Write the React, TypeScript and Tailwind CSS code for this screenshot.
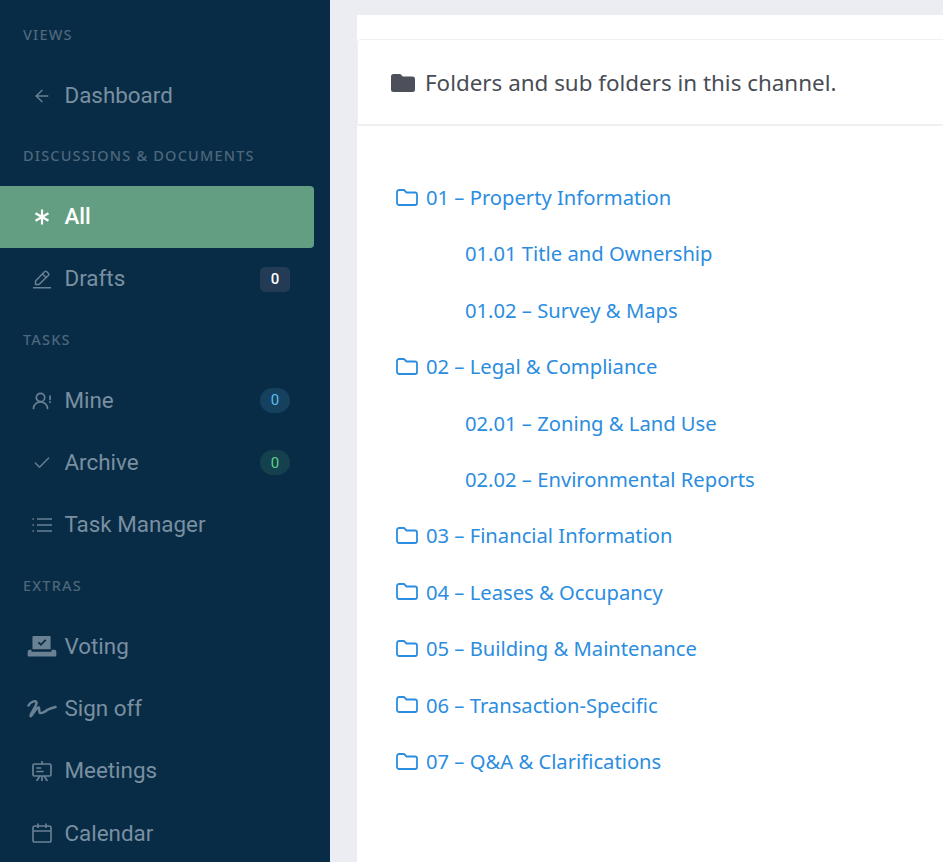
import { ArrowLeft, Check } from 'lucide-react'
import type { ReactNode } from 'react'

function AsteriskIcon() {
  return (
    <svg viewBox="0 0 16 16" className="w-[16px] h-[16px]" fill="none" stroke="currentColor" strokeWidth="2.2" strokeLinecap="butt">
      <path d="M8 .5v15M1.500 4.250l13 7.500M14.500 4.250l-13 7.500" />
    </svg>
  )
}

function DraftIcon() {
  return (
    <svg viewBox="0 0 20 20" className="w-[20px] h-[20px]" fill="none" stroke="currentColor" strokeWidth="1.5" strokeLinejoin="round">
      <path d="M3.500 15.500v-3.500L12.800 2.500a1.200 1.200 0 0 1 1.700 0l2 2a1.200 1.200 0 0 1 0 1.700L7 15.500H3.500Z" />
      <path d="M10.500 5l4 4M1 18.700h18" />
    </svg>
  )
}

function MineIcon() {
  return (
    <svg viewBox="0 0 20 20" className="w-[20px] h-[20px]" fill="none" stroke="currentColor" strokeWidth="1.7" strokeLinecap="round">
      <circle cx="8.500" cy="6.500" r="4.200" />
      <path d="M1.500 17.500c0-3.800 3-6.500 7-6.500s7 2.700 7 6.500" />
      <path d="M18 5v3.500M18 10.800v.4" />
    </svg>
  )
}

function ListIcon() {
  return (
    <svg viewBox="0 0 20 20" className="w-[20px] h-[20px]" fill="none" stroke="currentColor" strokeWidth="1.6">
      <path d="M5 4h15M5 10h15M5 16h15" />
      <path d="M0.500 4h1.500M0.500 10h1.500M0.500 16h1.500" />
    </svg>
  )
}

function VotingIcon() {
  return (
    <svg viewBox="0 0 30 22" className="w-[30px] h-[21px]" fill="currentColor">
      <path fillRule="evenodd" d="M6 0h17a1 1 0 0 1 1 1v13H5V1a1 1 0 0 1 1-1Zm4.500 7.200 1.300-1.300 2 2 4.400-4.400 1.300 1.300-5.700 5.700-3.300-3.300Z" />
      <path d="M0 16.500a2 2 0 0 1 2-2h2v2h21v-2h3a2 2 0 0 1 2 2v4a1 1 0 0 1-1 1H1a1 1 0 0 1-1-1v-4Z" />
    </svg>
  )
}

function SignIcon() {
  return (
    <svg viewBox="0 0 30 20" className="w-[30px] h-[20px]" fill="none" stroke="currentColor" strokeWidth="2.500" strokeLinecap="round" strokeLinejoin="round">
      <path d="M1.500 6.500C3 3 9 .5 9.500 3.500 10 7 3.500 14 3.500 17c0 2 5-7 7.500-8.500 2-1 .5 5 2 5.500 2 .5 6-2 7-3 2-1 5-2 8.500-3" />
    </svg>
  )
}

function MeetingIcon() {
  return (
    <svg viewBox="0 0 20 20" className="w-[20px] h-[20px]" fill="none" stroke="currentColor" strokeWidth="1.7" strokeLinecap="round">
      <rect x="1" y="3" width="18" height="12" rx="1.500" />
      <path d="M10 .5V3M5 7h3.500M5 10.500h6M7.500 15.500l-2.500 4M12.500 15.500l2.500 4M10 15.500v4" />
    </svg>
  )
}

function CalendarIcon() {
  return (
    <svg viewBox="0 0 20 20" className="w-[20px] h-[20px]" fill="none" stroke="currentColor" strokeWidth="1.6">
      <rect x="1" y="3" width="18" height="16" rx="1.800" />
      <path d="M1 8h18M6 .5v4.500M14 .5v4.500" />
    </svg>
  )
}

function FolderIcon() {
  return (
    <svg viewBox="0 0 22 17" className="w-[22px] h-[17px] mr-[8px] shrink-0" fill="none" stroke="currentColor" strokeWidth="1.800" strokeLinejoin="round">
      <path d="M1 3a2 2 0 0 1 2-2h5l2.500 2.500H19a2 2 0 0 1 2 2V14a2 2 0 0 1-2 2H3a2 2 0 0 1-2-2Z" />
    </svg>
  )
}

function Label({ children }: { children: ReactNode }) {
  return (
    <div className="h-[59px] flex items-center pl-[23px] font-['Noto_Sans',sans-serif] text-[14.5px] font-medium tracking-[1.2px] uppercase text-[#4e677c]">
      {children}
    </div>
  )
}

function Item({ icon, label, badge, active }: { icon: ReactNode; label: string; badge?: ReactNode; active?: boolean }) {
  return (
    <div
      className={`h-[62.3px] mr-[16px] flex items-center rounded-r-[4px] pr-[24px] ${
        active ? 'bg-[#639e82] text-white font-medium' : 'text-[#7a8fa1]'
      }`}
    >
      <div className={`w-[64.5px] pl-[27px] pr-[7.5px] shrink-0 flex items-center justify-center ${active ? '' : 'text-[#6a8194]'}`}>
        {icon}
      </div>
      <span className="flex-1 text-[22.4px]">{label}</span>
      {badge}
    </div>
  )
}

function Badge({ tone, children }: { tone: string; children: ReactNode }) {
  return <span className={`w-[30px] h-[25px] flex items-center justify-center text-[15px] ${tone}`}>{children}</span>
}

const folders = [
  { name: '01 – Property Information' },
  { name: '01.01 Title and Ownership', sub: true },
  { name: '01.02 – Survey & Maps', sub: true },
  { name: '02 – Legal & Compliance' },
  { name: '02.01 – Zoning & Land Use', sub: true },
  { name: '02.02 – Environmental Reports', sub: true },
  { name: '03 – Financial Information' },
  { name: '04 – Leases & Occupancy' },
  { name: '05 – Building & Maintenance' },
  { name: '06 – Transaction-Specific' },
  { name: '07 – Q&A & Clarifications' },
]

export default function App() {
  return (
    <div className="h-[862px] overflow-hidden flex bg-[#ebedf2]">
      {/* Sidebar */}
      <aside className="w-[330px] shrink-0 pt-[5.5px] bg-[#082c45] font-['Roboto',sans-serif] overflow-hidden">
        <Label>Views</Label>
        <Item icon={<ArrowLeft size={20} strokeWidth={1.6} />} label="Dashboard" />
        <Label>Discussions &amp; Documents</Label>
        <Item active icon={<AsteriskIcon />} label="All" />
        <Item
          icon={<DraftIcon />}
          label="Drafts"
          badge={<Badge tone="rounded-[5px] bg-[#233b54] text-white font-medium">0</Badge>}
        />
        <Label>Tasks</Label>
        <Item
          icon={<MineIcon />}
          label="Mine"
          badge={<Badge tone="rounded-full bg-[#15415f] text-[#5bbdf0]">0</Badge>}
        />
        <Item
          icon={<Check size={20} strokeWidth={1.6} />}
          label="Archive"
          badge={<Badge tone="rounded-full bg-[#15404e] text-[#5ad08a]">0</Badge>}
        />
        <Item icon={<ListIcon />} label="Task Manager" />
        <Label>Extras</Label>
        <Item icon={<VotingIcon />} label="Voting" />
        <Item icon={<SignIcon />} label="Sign off" />
        <Item icon={<MeetingIcon />} label="Meetings" />
        <Item icon={<CalendarIcon />} label="Calendar" />
      </aside>

      {/* Main */}
      <main className="flex-1 ml-[27px] mt-[15px] bg-white font-['Noto_Sans',sans-serif] min-w-0">
        <div className="mt-[24px] h-[87px] border-t border-l border-b-2 rounded-tl-[4px] border-[#eff0f3] flex items-center pl-[33px] pt-[2px] whitespace-nowrap">
          <svg viewBox="0 0 24 18" className="w-[24px] h-[18px] mr-[10px] text-[#4b505a]" fill="currentColor">
            <path d="M2.500 0h6.800l2.500 2.500h9.700A2.500 2.500 0 0 1 24 5v10.500a2.500 2.500 0 0 1-2.500 2.500h-19A2.500 2.500 0 0 1 0 15.500v-13A2.500 2.500 0 0 1 2.500 0Z" />
          </svg>
          <span className="text-[22.4px] text-[#484d55]">Folders and sub folders in this channel.</span>
        </div>
        <ul className="pt-[43px]">
          {folders.map(f => (
            <li
              key={f.name}
              className={`h-[56.4px] flex items-center text-[20.2px] text-[#2b8de0] whitespace-nowrap ${
                f.sub ? 'pl-[108px]' : 'pl-[39px]'
              }`}
            >
              {!f.sub && <FolderIcon />}
              {f.name}
            </li>
          ))}
        </ul>
      </main>
    </div>
  )
}
